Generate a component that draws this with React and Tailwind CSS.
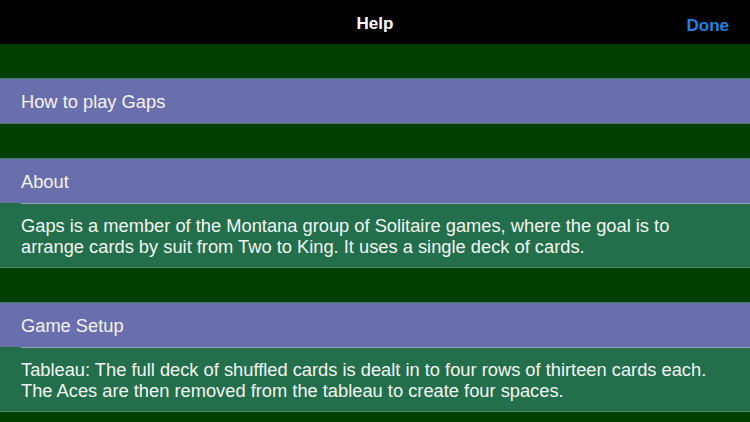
import React from "react";

const sections = [
  { title: "How to play Gaps" },
  {
    title: "About",
    body: "Gaps is a member of the Montana group of Solitaire games, where the goal is to arrange cards by suit from Two to King. It uses a single deck of cards.",
  },
  {
    title: "Game Setup",
    body: "Tableau: The full deck of shuffled cards is dealt in to four rows of thirteen cards each. The Aces are then removed from the tableau to create four spaces.",
  },
];

const Section = ({ title, body }) => (
  <div>
    <div className="h-[35px] bg-[#003f00] border-b border-[#4f7a64]" />
    <div className="bg-[#696ead]">
      <div className="h-[44px] flex items-center pl-[21px] pt-[2px] text-[18.3px] text-[#f4f4fa]">
        {title}
      </div>
    </div>
    {body && (
      <div className="bg-[#236e4b] relative">
        <div className="ml-[21px] h-px bg-[#8d9cbb]" />
        <div className="pl-[21px] pr-[30px] pt-[12px] pb-[10px] text-[18.3px] leading-[20.5px] text-[#f2f6f3]">
          {body}
        </div>
        <div className="h-px bg-[#4f8a6a]" />
      </div>
    )}
    {!body && <div className="h-px bg-[#4f7a64]" />}
  </div>
);

export default function App() {
  return (
    <div
      className="w-[750px] h-[422px] overflow-hidden bg-[#003f00]"
      style={{ fontFamily: '"Liberation Sans", Arial, sans-serif' }}
    >
      <div className="h-[44px] bg-black relative flex items-center justify-center pt-[3px]">
        <span className="text-white text-[17px] font-bold">Help</span>
        <span className="absolute right-[21px] top-[13px] text-[#1b84e6] text-[17px] font-bold">
          Done
        </span>
      </div>
      {sections.map((s, i) => (
        <Section key={i} {...s} />
      ))}
    </div>
  );
}
